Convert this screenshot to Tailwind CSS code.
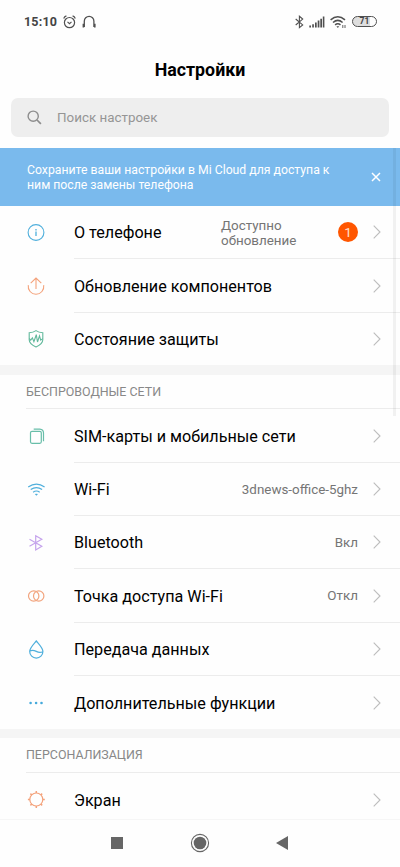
<!DOCTYPE html>
<html lang="ru">
<head>
<meta charset="utf-8">
<title>Настройки</title>
<script src="https://cdn.jsdelivr.net/npm/@tailwindcss/browser@4"></script>
</head>
<body class="bg-[#fefefe]">
<svg class="hidden">
  <symbol id="chev" viewBox="0 0 8 14"><path d="M.7.7 7 7 .7 13.3" fill="none" stroke="#bdbdbd" stroke-width="1.1"/></symbol>
</svg>
<div class="relative flex h-[867px] w-[400px] flex-col overflow-hidden bg-[#fefefe] font-[Roboto,sans-serif] text-black">
  <header class="flex h-[43px] shrink-0 items-center pl-6 pr-[23px] text-[#444]">
    <span class="w-[38px] whitespace-nowrap pt-px text-[12.5px] font-bold leading-4 tracking-[.2px]">15:10</span>
    <svg class="ml-px h-[14px] w-[14px]" viewBox="0 0 14 14" fill="none" stroke="#505050" stroke-width="1.2"><circle cx="6.5" cy="7.6" r="5.1"/><path d="M.7 3.4Q1.5 1.5 3.4.9M9.6.9Q11.5 1.5 12.3 3.4M4.5 6.9l2 1.7 2-1.7"/></svg>
    <svg class="ml-[5px] h-[14px] w-[14px]" viewBox="0 0 14 14" fill="none" stroke="#505050" stroke-width="1.3"><path d="M2.3 12V6.2a4.8 4.8 0 0 1 9.6 0V12"/><path d="M1.4 8.8v3.8M12.8 8.8v3.8" stroke-width="1.6"/></svg>
    <svg class="ml-auto h-[14px] w-[9px]" viewBox="0 0 9 14" fill="none" stroke="#505050" stroke-width="1.1"><path d="M.7 4l7 5.900-3.300 2.700V1.300l3.300 2.800-7 5.900"/></svg>
    <svg class="ml-[5px] h-[14px] w-[16px]" viewBox="0 0 16 14" fill="#505050"><path d="M.3 10.600h1.700v2H.3zM3.200 9.300h1.700v3.300H3.200zM6 7.500h1.700v5.100H6zM8.700 5.600h1.700v7H8.700zM11.300 3.700H13v8.900h-1.700zM13.800 1.600h1.600v11h-1.600z"/></svg>
    <svg class="ml-[5px] h-[14px] w-[17px]" viewBox="0 0 17 14" fill="none" stroke="#505050" stroke-width="1.5"><path d="M.6 4.900q7.200-6.400 14.400 0M3 7.500q4.800-4.200 9.600 0M5.100 9.900q2.700-2.200 5.400 0"/><path d="M6.400 11.200h2.800l-1.400 1.700z" fill="#505050" stroke="none"/><path d="M12.800 10v3M15 10v3" stroke-width=".9"/></svg>
    <span class="ml-[5px] flex h-[11px] w-[25px] items-center justify-center rounded-full border border-[#505050] bg-[linear-gradient(90deg,#dedede_75%,#fefefe_75%)] text-[8.5px] font-bold leading-none">71</span>
  </header>
  <h1 class="flex h-[54px] shrink-0 items-center justify-center text-[17.8px] font-bold">Настройки</h1>
  <div class="mx-[11px] mt-[1px] mb-[11px] flex h-[39px] shrink-0 items-center rounded-[7px] bg-[#eee] pl-4 text-[13.4px] text-[#959595]">
    <svg class="mr-[15px] h-[15px] w-[15px]" viewBox="0 0 15 15" fill="none" stroke="#8d8d8d" stroke-width="1.4"><circle cx="6.200" cy="6.200" r="5.100"/><path d="m10 10 3.900 3.900" stroke-width="1.7"/></svg>
    <span class="pt-[2px]">Поиск настроек</span>
  </div>
  <section class="flex h-[58px] shrink-0 items-center bg-[#7abaed] pl-[27px] pr-[19px] text-white">
    <p class="whitespace-nowrap pt-px text-[12.250px] leading-[14.5px]">Сохраните ваши настройки в Mi Cloud для доступа к<br>ним после замены телефона</p>
    <svg class="ml-auto h-[10px] w-[10px]" viewBox="0 0 10 10" fill="none" stroke="#fff" stroke-width="1.5"><path d="m1 1 8 8M9 1 1 9"/></svg>
  </section>

  <div class="flex h-[53px] shrink-0 items-center pl-6">
    <svg class="mr-[26px] h-6 w-6 shrink-0" viewBox="0 0 24 24" fill="none" stroke="#4fafdc" stroke-width="1.1"><circle cx="12" cy="11.500" r="7.900"/><path d="M12 10.500v4.600M12 7.900v1.500" stroke-width="1.300"/></svg>
    <div class="flex h-full flex-1 items-center border-b border-[#ececec] pr-[19px]">
      <span class="pt-[3px] text-[16.15px]">О телефоне</span>
      <span class="ml-auto w-[117px] pt-[2px] text-[13.4px] leading-[15.5px] text-[#757575]">Доступно<br>обновление</span>
      <span class="mr-[15px] flex h-5 w-5 items-center justify-center rounded-full bg-[#ff5600] pt-px text-[13.500px] text-[#ffe0d0]">1</span>
      <svg class="h-[14px] w-2"><use href="#chev"/></svg>
    </div>
  </div>
  <div class="flex h-[54px] shrink-0 items-center pl-6">
    <svg class="mr-[26px] h-6 w-6 shrink-0" viewBox="0 0 24 24" fill="none" stroke="#f4a27b" stroke-width="1.100"><path d="M4.300 11.200a7.800 7.800 0 1 0 15.400 0M12 15V4.200M6.700 9.200 12 4l5.300 5.200"/></svg>
    <div class="flex h-full flex-1 items-center border-b border-[#ececec] pr-[19px]"><span class="pt-[3px] text-[16.15px]">Обновление компонентов</span><svg class="ml-auto h-[14px] w-2"><use href="#chev"/></svg></div>
  </div>
  <div class="flex h-[52px] shrink-0 items-center pl-6">
    <svg class="mr-[26px] h-6 w-6 shrink-0" viewBox="0 0 24 24" fill="none" stroke="#62b99c" stroke-width="1.100"><path d="M12 3.600c2 1.400 4.300 2 6.800 2.200v7c0 3.200-3 5.500-6.800 7.200-3.800-1.700-6.800-4-6.800-7.200v-7c2.500-.2 4.800-.8 6.800-2.200z"/><path d="M5.200 11.500l1.500 1.600 1.700-2.300 1.500 3.900 2.400-7 1.200 7.300 2-6.200 1.200 4.300 2.100-1.500"/></svg>
    <div class="flex h-full flex-1 items-center pr-[19px]"><span class="pt-[3px] text-[16.15px]">Состояние защиты</span><svg class="ml-auto h-[14px] w-2"><use href="#chev"/></svg></div>
  </div>

  <div class="h-[10px] shrink-0 bg-[#f5f5f5]"></div>
  <div class="ml-[26px] flex h-[34px] shrink-0 items-center border-b border-[#ececec] pt-[2px] text-[12.45px] text-[#888]">БЕСПРОВОДНЫЕ СЕТИ</div>

  <div class="flex h-[54px] shrink-0 items-center pl-6">
    <svg class="mr-[26px] h-6 w-6 shrink-0" viewBox="0 0 24 24" fill="none" stroke="#68bea9" stroke-width="1.200"><rect x="6.500" y="7.300" width="10.800" height="12" rx="1.500"/><path d="M9.700 5.100h6.100q3.700.3 3.700 3.900v8.300"/></svg>
    <div class="flex h-full flex-1 items-center border-b border-[#ececec] pr-[19px]"><span class="pt-[3px] text-[16.15px]">SIM-карты и мобильные сети</span><svg class="ml-auto h-[14px] w-2"><use href="#chev"/></svg></div>
  </div>
  <div class="flex h-[53px] shrink-0 items-center pl-6">
    <svg class="mr-[26px] h-6 w-6 shrink-0" viewBox="0 0 24 24" fill="none" stroke="#4fafdc" stroke-width="1.200"><path d="M4.200 8.900q8.200-5.600 16.400 0M6.700 11.600q5.700-4 11.400 0M9.100 14.200q3.300-2.400 6.600 0"/><path d="M10.800 16.100q1.600-.8 3.200 0l-1.600 1.700z" fill="#4fafdc" stroke="none"/></svg>
    <div class="flex h-full flex-1 items-center border-b border-[#ececec] pr-[19px]"><span class="pt-[3px] text-[16.15px]">Wi-Fi</span><span class="ml-auto mr-[15px] pt-[2px] text-[13.400px] text-[#757575]">3dnews-office-5ghz</span><svg class="h-[14px] w-2"><use href="#chev"/></svg></div>
  </div>
  <div class="flex h-[53px] shrink-0 items-center pl-6">
    <svg class="mr-[26px] h-6 w-6 shrink-0" viewBox="0 0 24 24" fill="none" stroke="#c5a3ec" stroke-width="1.200"><path d="M5.500 8.300 17.800 15.300 11.700 18.900V4.800l6.100 3.500L5.500 15.300"/></svg>
    <div class="flex h-full flex-1 items-center border-b border-[#ececec] pr-[19px]"><span class="pt-[3px] text-[16.15px]">Bluetooth</span><span class="ml-auto mr-[15px] pt-[2px] text-[13.400px] text-[#757575]">Вкл</span><svg class="h-[14px] w-2"><use href="#chev"/></svg></div>
  </div>
  <div class="flex h-[54px] shrink-0 items-center pl-6">
    <svg class="mr-[26px] h-6 w-6 shrink-0" viewBox="0 0 24 24" fill="none" stroke="#f2a57f" stroke-width="1.200"><circle cx="9.700" cy="12" r="5.200"/><circle cx="14.700" cy="12" r="5.200"/></svg>
    <div class="flex h-full flex-1 items-center border-b border-[#ececec] pr-[19px]"><span class="pt-[3px] text-[16.15px]">Точка доступа Wi-Fi</span><span class="ml-auto mr-[15px] pt-[2px] text-[13.400px] text-[#757575]">Откл</span><svg class="h-[14px] w-2"><use href="#chev"/></svg></div>
  </div>
  <div class="flex h-[53px] shrink-0 items-center pl-6">
    <svg class="mr-[26px] h-6 w-6 shrink-0" viewBox="0 0 24 24" fill="none" stroke="#4fafdc" stroke-width="1.200"><path d="M12.300 3c3 3.600 6.600 7 6.600 10.500a6.600 6.600 0 0 1-13.200 0c0-3.500 3.600-6.900 6.600-10.500zM5.800 12.900c2.800-1.300 4.500-.6 6.500.5s3.900 1.600 6.500.3"/></svg>
    <div class="flex h-full flex-1 items-center border-b border-[#ececec] pr-[19px]"><span class="pt-[3px] text-[16.15px]">Передача данных</span><svg class="ml-auto h-[14px] w-2"><use href="#chev"/></svg></div>
  </div>
  <div class="flex h-[53px] shrink-0 items-center pl-6">
    <svg class="mr-[26px] h-6 w-6 shrink-0" viewBox="0 0 24 24" fill="#45a9db"><circle cx="6.600" cy="12" r="1.300"/><circle cx="12.100" cy="12" r="1.300"/><circle cx="17.500" cy="12" r="1.300"/></svg>
    <div class="flex h-full flex-1 items-center pr-[19px]"><span class="pt-[3px] text-[16.15px]">Дополнительные функции</span><svg class="ml-auto h-[14px] w-2"><use href="#chev"/></svg></div>
  </div>

  <div class="h-[9px] shrink-0 bg-[#f5f5f5]"></div>
  <div class="ml-[26px] flex h-[35px] shrink-0 items-center border-b border-[#ececec] pt-px text-[12.45px] text-[#888]">ПЕРСОНАЛИЗАЦИЯ</div>
  <div class="flex h-[46px] shrink-0 items-start pl-6">
    <svg class="mr-[26px] mt-[14px] h-6 w-6 shrink-0" viewBox="0 0 24 24" fill="none" stroke="#f4a27b" stroke-width="1.200"><circle cx="12.300" cy="12.500" r="6.500"/><path d="M12.300 4v2M12.300 19v2M3.900 12.500h2M18.800 12.500h2M6.400 6.600l1.400 1.400M16.800 17l1.400 1.400M18.200 6.600 16.800 8M7.800 17l-1.400 1.400" stroke-width="1.500"/></svg>
    <div class="flex h-[53px] flex-1 items-center pr-[19px]"><span class="pt-[3px] text-[16.15px]">Экран</span><svg class="ml-auto h-[14px] w-2"><use href="#chev"/></svg></div>
  </div>

  <nav class="flex h-[48px] shrink-0 items-center border-t border-[#f6f6f6] bg-[#fefefe] pb-[2px] pl-[111px]">
    <span class="h-3 w-3 bg-[#666]"></span>
    <svg class="ml-[67px] h-5 w-5" viewBox="0 0 20 20"><circle cx="10" cy="10" r="8.600" fill="none" stroke="#666" stroke-width="1.100"/><circle cx="10" cy="10" r="6.300" fill="#666"/></svg>
    <svg class="ml-[66px] h-[14px] w-3" viewBox="0 0 12 14"><path d="M0 7 12 0v14z" fill="#666"/></svg>
  </nav>
  <div class="absolute left-[393px] top-[148px] h-[268px] w-[3px] bg-black/5"></div>
</div>
</body>
</html>
